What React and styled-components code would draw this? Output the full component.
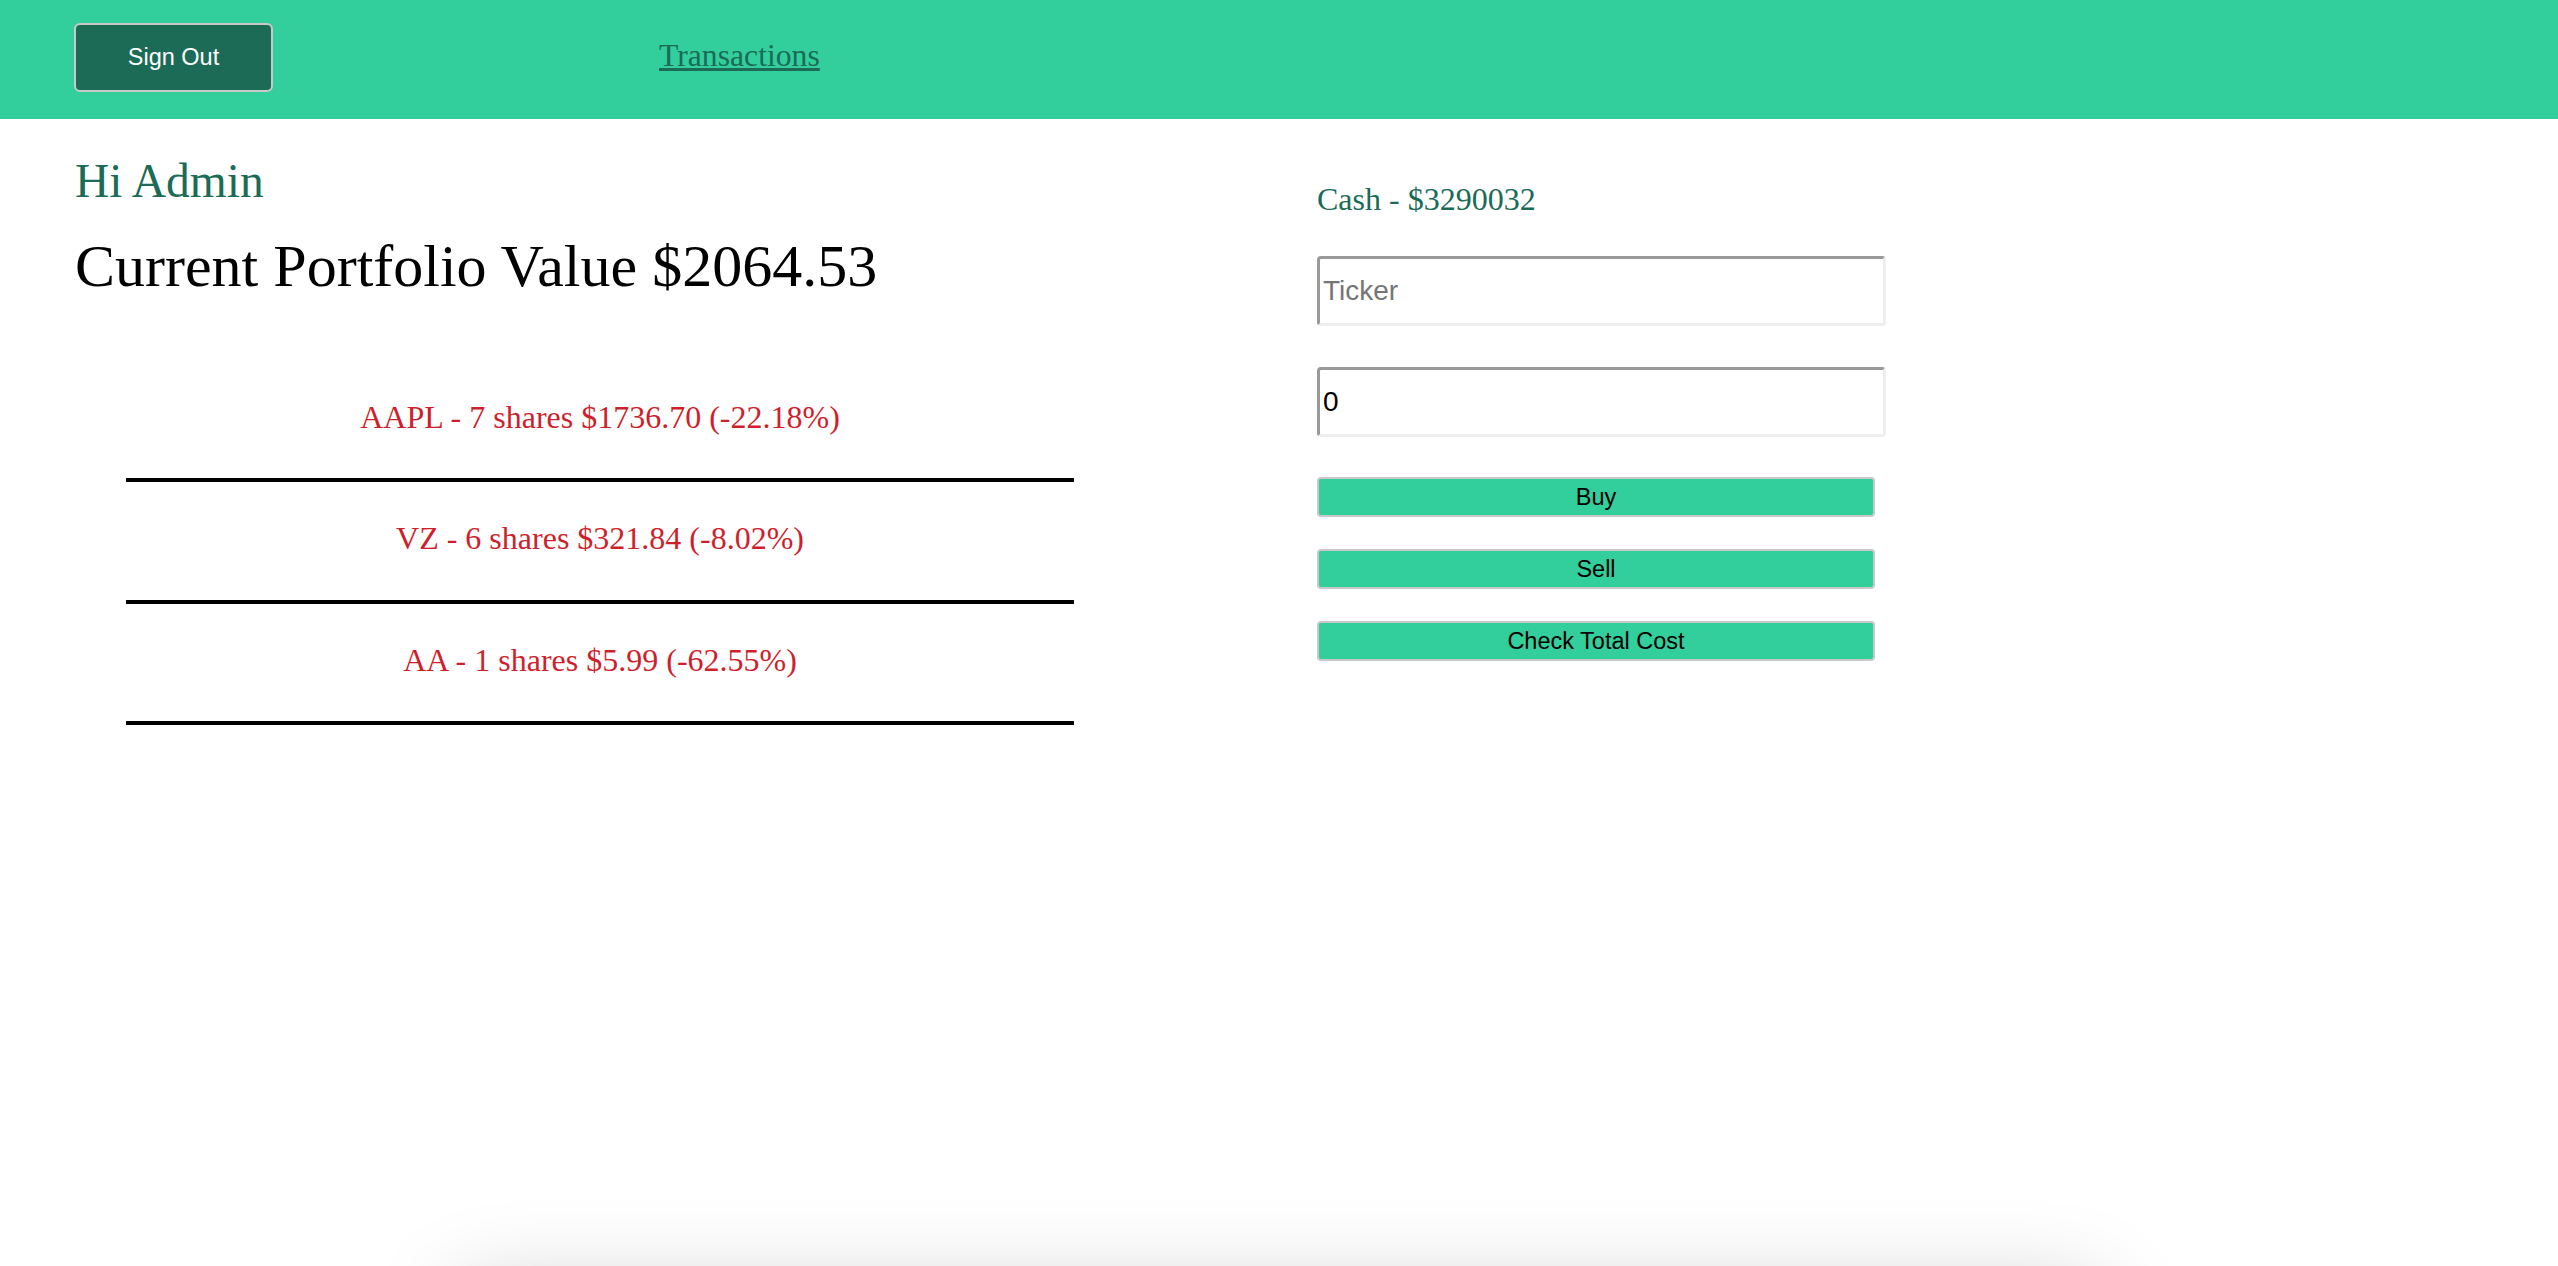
import React from 'react';
import styled, { createGlobalStyle } from 'styled-components';

const holdings = [
	{ ticker: 'AAPL', shares: 7, value: '1736.70', change: '-22.18' },
	{ ticker: 'VZ', shares: 6, value: '321.84', change: '-8.02' },
	{ ticker: 'AA', shares: 1, value: '5.99', change: '-62.55' },
];

const App = () => {
	return (
		<Page>
			<GlobalStyle />
			<Header>
				<SignOut>Sign Out</SignOut>
				<NavLink href='#'>Transactions</NavLink>
			</Header>
			<Main>
				<Portfolio>
					<Greeting>Hi Admin</Greeting>
					<Total>Current Portfolio Value $2064.53</Total>
					<Holdings>
						{holdings.map((h) => (
							<Holding key={h.ticker}>
								{h.ticker} - {h.shares} shares ${h.value} ({h.change}%)
							</Holding>
						))}
					</Holdings>
				</Portfolio>
				<Trade>
					<Cash>Cash - $3290032</Cash>
					<Field type='text' placeholder='Ticker' />
					<Field type='number' defaultValue={0} />
					<Actions>
						<ActionButton>Buy</ActionButton>
						<ActionButton>Sell</ActionButton>
						<ActionButton>Check Total Cost</ActionButton>
					</Actions>
				</Trade>
			</Main>
			<Footer />
		</Page>
	);
};

export default App;

const GlobalStyle = createGlobalStyle`
	html, body {
		margin: 0;
		padding: 0;
		background: #fff;
		overflow: hidden;
	}
	body {
		font-family: 'Liberation Serif', 'Times New Roman', serif;
	}
`;

const Page = styled.div`
	display: flex;
	flex-direction: column;
	height: 100vh;
	overflow: hidden;
`;

const Header = styled.header`
	display: flex;
	align-items: center;
	height: 119px;
	padding-left: 74px;
	background: #32cf9c;
	flex-shrink: 0;
`;

const SignOut = styled.button`
	width: 199px;
	height: 69px;
	margin-top: -5px;
	background: #1b6b57;
	color: #fff;
	border: 2px solid #c9c9c9;
	border-radius: 6px;
	font-family: 'Liberation Sans', Arial, sans-serif;
	font-size: 23.5px;
	cursor: pointer;
`;

const NavLink = styled.a`
	margin-left: 386px;
	margin-top: -8px;
	color: #1b6b57;
	font-size: 31.7px;
	text-decoration: underline;
`;

const Main = styled.main`
	flex: 1;
	display: grid;
	grid-template-columns: 1050px 1fr;
	column-gap: 192px;
	padding-left: 75px;
	align-items: start;
`;

const Portfolio = styled.section`
	display: flex;
	flex-direction: column;
	padding-top: 34px;
`;

const Greeting = styled.h2`
	margin: 0;
	font-size: 47.5px;
	line-height: 1.2;
	font-weight: normal;
	color: #1b6b57;
`;

const Total = styled.h1`
	margin: 20px 0 0;
	font-size: 60px;
	line-height: 1.2;
	font-weight: normal;
	color: #000;
`;

const Holdings = styled.div`
	display: flex;
	flex-direction: column;
	margin: 59px 51px 0;
`;

const Holding = styled.div`
	padding: 37px 0 42px;
	border-bottom: 4px solid #000;
	text-align: center;
	font-size: 32px;
	line-height: 1.2;
	color: #cf1f2d;
`;

const Trade = styled.section`
	display: flex;
	flex-direction: column;
	align-items: flex-start;
	padding-top: 61px;
`;

const Cash = styled.div`
	font-size: 32px;
	line-height: 1.2;
	color: #1b6b57;
	margin-bottom: 38px;
`;

const Field = styled.input`
	box-sizing: border-box;
	width: 569px;
	height: 70px;
	margin-bottom: 41px;
	padding: 0 3px;
	border: 3px solid;
	border-color: #999 #eee #eee #999;
	border-radius: 4px;
	font-family: 'Liberation Sans', Arial, sans-serif;
	font-size: 28px;
	color: #000;
	outline: none;
	-moz-appearance: textfield;

	&::placeholder {
		color: #757575;
	}

	&::-webkit-outer-spin-button,
	&::-webkit-inner-spin-button {
		-webkit-appearance: none;
		margin: 0;
	}
`;

const Actions = styled.div`
	display: flex;
	flex-direction: column;
	gap: 32px;
	margin-top: -1px;
`;

const ActionButton = styled.button`
	box-sizing: border-box;
	width: 558px;
	height: 40px;
	background: #32cf9c;
	border: 2px solid #c9c9c9;
	border-radius: 4px;
	font-family: 'Liberation Sans', Arial, sans-serif;
	font-size: 23.5px;
	color: #000;
	cursor: pointer;
`;

const Footer = styled.footer`
	flex-shrink: 0;
	width: 1640px;
	height: 300px;
	margin: 26px auto -326px;
	background: #fff;
	box-shadow: 0 0 84px rgba(0, 0, 0, 0.22);
`;
